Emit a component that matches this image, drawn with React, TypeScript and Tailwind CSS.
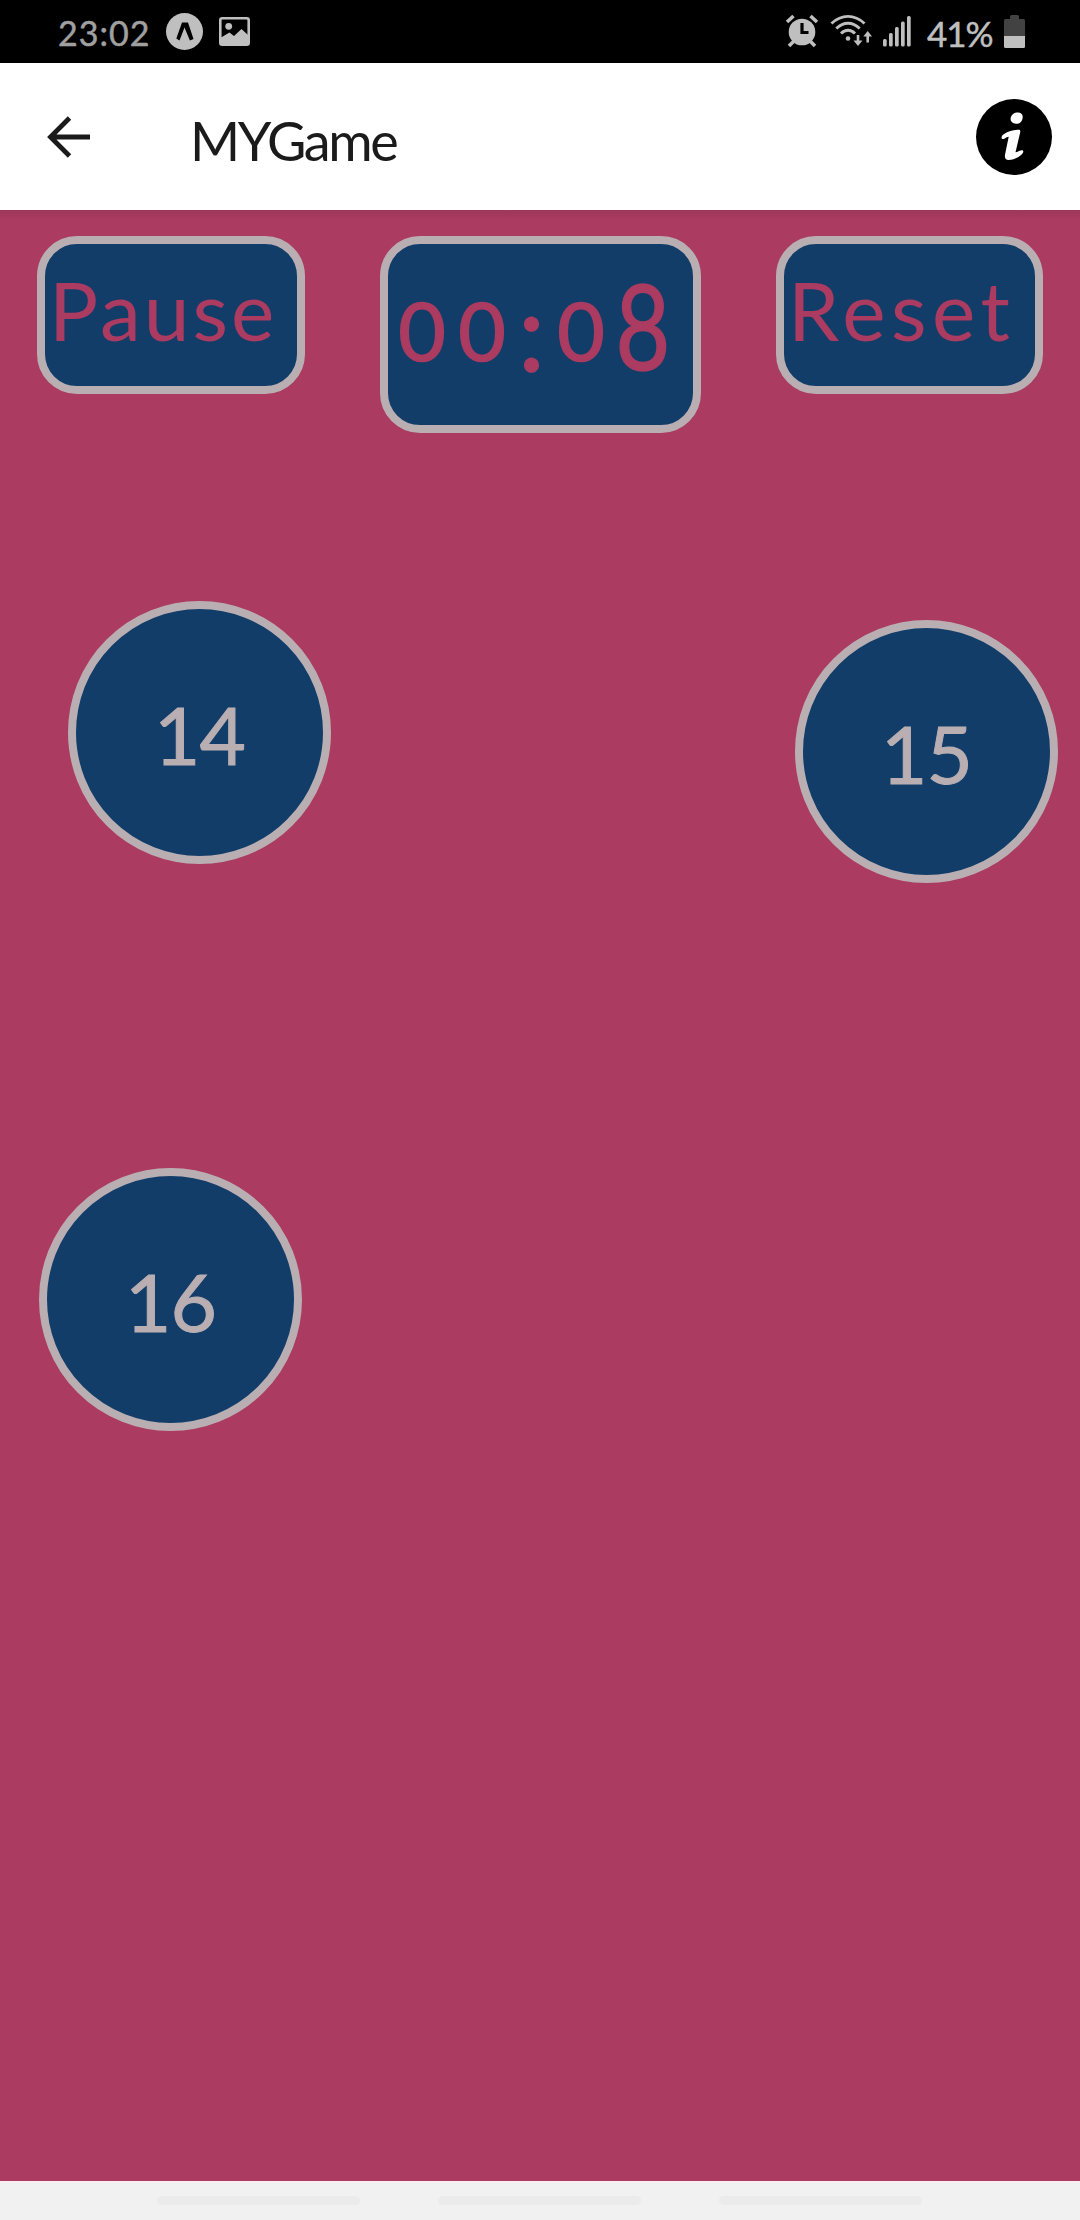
import React from "react";

function AlarmIcon() {
  return (
    <svg width="34" height="34" viewBox="0 0 34 34" className="text-[#bfbfbf]">
      <circle cx="17" cy="18" r="13.3" fill="currentColor" />
      <path d="M2 8 8.500 2M32 8l-6.500-6M9 27l-5 5M25 27l5 5" stroke="currentColor" strokeWidth="3.600" fill="none" />
      <path d="M17 9v9.500h6.500" stroke="#000" strokeWidth="3.200" fill="none" />
    </svg>
  );
}

function WifiIcon() {
  return (
    <svg width="42" height="36" viewBox="0 0 42 36" className="text-[#bfbfbf]" fill="none" stroke="currentColor">
      <path d="M1.500 10.500C11.500 1 24.500 1 34.500 10.500M6.300 15.500c7.200-7 16.200-7 23.400 0M11 20.500c4.400-4.300 9.800-4.300 14 0" strokeWidth="2.900" />
      <circle cx="18" cy="25.500" r="2.300" fill="currentColor" stroke="none" />
      <path d="M28 22v8M37.700 29.500v-8" strokeWidth="2.600" />
      <path d="M23.500 27.500h9L28 33zM33.300 23.500h8.800L37.700 18z" fill="currentColor" stroke="none" />
    </svg>
  );
}

function SignalIcon() {
  return (
    <svg width="28" height="31" viewBox="0 0 28 31" fill="#bfbfbf">
      <rect x="0" y="23" width="3.700" height="7.500" rx="1.500" />
      <rect x="6" y="17" width="3.700" height="13.500" rx="1.500" />
      <rect x="12" y="11" width="3.700" height="19.500" rx="1.500" />
      <rect x="18" y="5.500" width="3.700" height="25" rx="1.500" />
      <rect x="24" y="0" width="3.700" height="30.500" rx="1.500" />
    </svg>
  );
}

function BatteryIcon() {
  return (
    <svg width="21" height="33" viewBox="0 0 21 33">
      <path d="M6 4V1.500Q6 0 7.500 0h6Q15 0 15 1.500V4h4.500Q21 4 21 5.500V21H0V5.500Q0 4 1.500 4z" fill="#424242" />
      <path d="M0 21h21v10.500q0 1.500-1.500 1.500h-18Q0 33 0 31.500z" fill="#bfbfbf" />
    </svg>
  );
}

function StatusBar() {
  return (
    <div className="relative flex h-[63px] items-start bg-black">
      <span className="ml-[58px] mt-[13px] w-[108px] whitespace-nowrap text-[34px] leading-[40px] tracking-[1px] text-[#a0a0a0] [-webkit-text-stroke:0.5px]">23:02</span>
      <svg className="mt-[13px] shrink-0" width="37" height="37" viewBox="0 0 37 37">
        <circle cx="18.500" cy="18.500" r="18.500" fill="#bfbfbf" />
        <path d="M16 9.500h6l5.500 16.500-3.600 1.500-5.400-13-5 13-3.200-2z" fill="#000" />
      </svg>
      <svg className="ml-4 mt-[17px] shrink-0" width="31" height="29" viewBox="0 0 31 29">
        <rect x="1.300" y="1.300" width="28.400" height="26.400" rx="2" fill="none" stroke="#bfbfbf" strokeWidth="2.600" />
        <circle cx="9.700" cy="9.300" r="3.400" fill="#bfbfbf" />
        <path d="m2 20.500 8.500-5L15 19l7.500-7 6.500 6v9.500H2z" fill="#bfbfbf" />
      </svg>
      <div className="ml-auto mr-[55px] flex items-start">
        <div className="mt-[14px] w-[45px]"><AlarmIcon /></div>
        <div className="mt-[13px] w-[53px]"><WifiIcon /></div>
        <div className="mt-[16px] w-[44px]"><SignalIcon /></div>
        <span className="mt-[13px] w-[77px] whitespace-nowrap text-[35px] leading-[40px] tracking-[-1px] text-[#bfbfbf] [-webkit-text-stroke:0.5px]">41%</span>
        <div className="mt-[15px]"><BatteryIcon /></div>
      </div>
    </div>
  );
}

function Header() {
  return (
    <div className="flex h-[147px] items-center bg-white pl-[47px] pr-[28px]">
      <svg width="44" height="44" viewBox="0 0 44 44" className="shrink-0">
        <path d="M22.500 3 3.500 22l19 19M3.500 22H43" fill="none" stroke="#1b1b1b" strokeWidth="4.800" />
      </svg>
      <span className="ml-[99px] mt-[8px] text-[54px] leading-[60px] tracking-[-2.4px] text-[#1b1b1b]">MYGame</span>
      <svg width="76" height="76" viewBox="0 0 76 76" className="ml-auto shrink-0">
        <circle cx="38" cy="38" r="38" fill="#000" />
        <path d="M40.500 13.500c4.500-.7 7 2 6 6-.8 4-3.500 5.500-6.500 5.300-4-.2-6-2.800-5.300-6 .7-3 3-5 5.800-5.300zM43 30.800c1.200 0 1.500 1 1.200 2.500l-4.700 20c1.500-.2 2.500-1 3.500-1.400 2-.8 4.300-1.500 4.300.7 0 3.300-8.300 8.400-14.600 8.400-3.400 0-4.300-2.300-3.600-5.700l3.600-17.500c-1.700 0-2.500.8-3.500 1.500-1.800 1.300-3.700.7-3.700-.9 0-3.700 10.500-7.600 17.500-7.600z" fill="#fff" />
      </svg>
    </div>
  );
}

function ControlButton({ label, className }: { label: string; className: string }) {
  return (
    <button className={`flex h-[158px] items-start rounded-[40px] border-8 border-[#b9afb3] bg-[#133d69] pt-[15px] text-[82px] leading-[100px] text-[#ab3b60] ${className}`}>
      {label}
    </button>
  );
}

function Timer() {
  return (
    <div className="flex h-[197px] w-[321px] items-start rounded-[40px] border-8 border-[#b9afb3] bg-[#133d69] pl-[4px] pt-[35px] text-[82px] leading-[100px] text-[#ab3b60] [-webkit-text-stroke:1.5px]">
      <span className="w-[60px] text-center">0</span>
      <span className="w-[60px] text-center">0</span>
      <span className="w-[39px] text-center text-[108px]">:</span>
      <span className="w-[60px] text-center">0</span>
      <span className="-mt-[4px] w-[64px] origin-center scale-x-[0.8] text-center text-[118px]">
        <span className="-mx-2">8</span>
      </span>
    </div>
  );
}

const balls = [
  { value: 14, place: "left-[68px] top-[391px]" },
  { value: 15, place: "left-[795px] top-[410px]" },
  { value: 16, place: "left-[39px] top-[958px]" },
];

export default function App() {
  return (
    <div className="flex h-[2220px] w-[1080px] flex-col overflow-hidden font-['Lato',sans-serif]">
      <StatusBar />
      <Header />
      <main className="relative h-[1971px] bg-[#ab3b60]">
        <div className="h-[10px] bg-linear-to-b from-[#9c3759] to-[#ab3b60]" />
        <div className="flex items-start justify-between px-[37px] pt-[16px]">
          <ControlButton label="Pause" className="w-[268px] pl-[4px] tracking-[3px]" />
          <Timer />
          <ControlButton label="Reset" className="w-[267px] pl-[4px] tracking-[5.5px]" />
        </div>
        {balls.map((b) => (
          <div key={b.value} className={`absolute flex size-[263px] items-center justify-center rounded-full border-8 border-[#b9afb3] bg-[#133d69] pt-[3px] text-[80px] leading-none tracking-[-1px] text-[#b9afb3] [-webkit-text-stroke:1px] ${b.place}`}>
            {b.value}
          </div>
        ))}
      </main>
      <div className="flex h-[39px] items-start gap-[78px] border-t-2 border-[#f9eff2] bg-[#f1f1f1] pl-[157px] pt-[13px]">
        <div className="h-[9px] w-[203px] rounded-full bg-[#ebebeb]" />
        <div className="h-[9px] w-[203px] rounded-full bg-[#ebebeb]" />
        <div className="h-[9px] w-[203px] rounded-full bg-[#ebebeb]" />
      </div>
    </div>
  );
}
